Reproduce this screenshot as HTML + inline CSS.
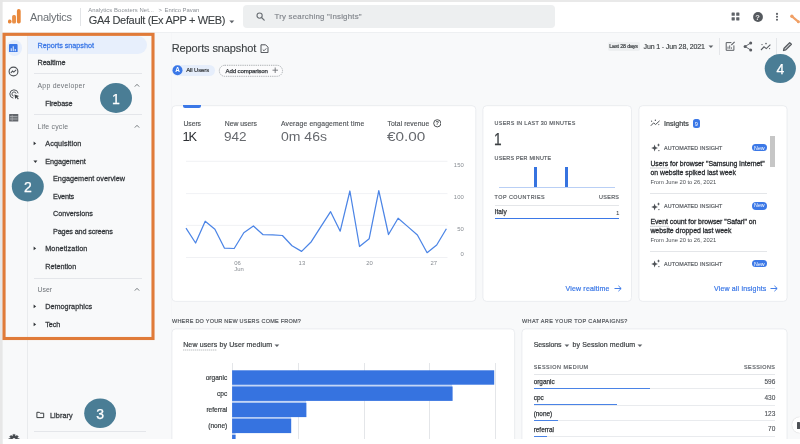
<!DOCTYPE html>
<html lang="en">
<head>
<meta charset="utf-8">
<title>Analytics - Reports snapshot</title>
<style>
html,body{margin:0;padding:0;}
body{width:800px;height:444px;overflow:hidden;position:relative;background:#f8f9fa;font-family:"Liberation Sans",sans-serif;}
#app{position:absolute;left:0;top:0;width:800px;height:444px;overflow:hidden;filter:blur(0.4px);}
.b{position:absolute;display:block;}
.t{position:absolute;white-space:nowrap;display:block;}
header,nav,main,.anno{display:contents;}
</style>
</head>
<body>
<div id="app">
<div class="b " style="left:0px;top:0px;width:800.00px;height:444.00px;background:#f8f9fa;"></div>
<header>
<div class="b " style="left:0px;top:2px;width:800.00px;height:30.00px;background:#ffffff;"></div>
<div class="b " style="left:0px;top:32px;width:800.00px;height:1.00px;background:#eef0f2;"></div>
<svg class="b" style="left:7.9px;top:8.2px;" width="14" height="17" viewBox="0 0 14 17"><rect x="8.9" y="1.1" width="3.8" height="14.4" rx="1.8" fill="#e8873a"/>
<rect x="4.1" y="7" width="3.9" height="8.5" rx="1.5" fill="#ea9048"/>
<circle cx="1.7" cy="13.5" r="1.9" fill="#e8873a"/></svg>
<span class="t " style="left:30.00px;top:11.33px;font-size:11px;line-height:13.2px;color:#6a6f74;letter-spacing:-0.252px;">Analytics</span>
<div class="b " style="left:80px;top:8px;width:0.80px;height:18.00px;background:#e2e4e7;"></div>
<span class="t " style="left:88.25px;top:6.62px;font-size:5.9px;line-height:7.08px;color:#8b9096;letter-spacing:0.062px;">Analytics Boosters Net...</span>
<span class="t " style="left:158.60px;top:6.62px;font-size:5.9px;line-height:7.08px;color:#8b9096;">&gt;</span>
<span class="t " style="left:164.50px;top:6.62px;font-size:5.9px;line-height:7.08px;color:#8b9096;letter-spacing:-0.031px;">Enrico Pavan</span>
<span class="t " style="left:88.75px;top:14.33px;font-size:11px;line-height:13.2px;color:#3c4043;-webkit-text-stroke:0.1px #3c4043;letter-spacing:-0.330px;">GA4 Default (Ex APP + WEB)</span>
<svg class="b" style="left:229px;top:19.5px;" width="6" height="4" viewBox="0 0 6 4"><path d="M0.3 0.5 L5.3 0.5 L2.8 3.3 Z" fill="#5f6368"/></svg>
<div class="b " style="left:243px;top:5px;width:312.00px;height:23.00px;background:#edeff0;border-radius:4px;"></div>
<svg class="b" style="left:256px;top:11.6px;" width="9" height="9" viewBox="0 0 9 9"><circle cx="3.6" cy="3.6" r="2.6" fill="none" stroke="#6a6f74" stroke-width="1.1"/><path d="M5.5 5.5 L8.2 8.2" stroke="#6a6f74" stroke-width="1.2" stroke-linecap="round"/></svg>
<span class="t " style="left:274.50px;top:12.31px;font-size:7.9px;line-height:9.48px;color:#80858b;-webkit-text-stroke:0.15px #80858b;letter-spacing:0.202px;">Try searching "Insights"</span>
<svg class="b" style="left:731.2px;top:11.8px;" width="9" height="9" viewBox="0 0 9 9"><g fill="#5f6368"><rect x="0.6" y="0.6" width="3.2" height="3.2" rx="0.4"/><rect x="5.2" y="0.6" width="3.2" height="3.2" rx="0.4"/><rect x="0.6" y="5.2" width="3.2" height="3.2" rx="0.4"/><rect x="5.2" y="5.2" width="3.2" height="3.2" rx="0.4"/></g></svg>
<svg class="b" style="left:752.6px;top:11.6px;" width="10" height="10" viewBox="0 0 10 10"><circle cx="5" cy="5" r="4.9" fill="#55595e"/></svg>
<span class="t " style="left:755.31px;top:12.85px;font-size:7.5px;line-height:9.0px;color:#e8e8e8;font-weight:700;">?</span>
<svg class="b" style="left:775px;top:12px;" width="4" height="10" viewBox="0 0 4 10"><g fill="#5f6368"><circle cx="2" cy="1.9" r="1.05"/><circle cx="2" cy="4.8" r="1.05"/><circle cx="2" cy="7.7" r="1.05"/></g></svg>
<svg class="b" style="left:788px;top:12px;" width="12" height="12" viewBox="0 0 12 12"><path d="M4.2 4.6 L10.2 9.6" stroke="#f0a066" stroke-width="2.1" stroke-linecap="round"/><circle cx="3.9" cy="4.3" r="1.7" fill="#f0a066"/><circle cx="10.4" cy="9.8" r="1.5" fill="#f0a066"/></svg>
</header>
<nav>
<div class="b " style="left:27px;top:33px;width:0.80px;height:406.00px;background:#e9ebed;"></div>
<div class="b " style="left:170.8px;top:33px;width:0.80px;height:406.00px;background:#f5f6f8;"></div>
<div class="b " style="left:6.6px;top:39.8px;width:15.80px;height:15.80px;background:#e6eefc;border-radius:50%;"></div>
<svg class="b" style="left:9.4px;top:43.7px;" width="8.6" height="8.8" viewBox="0 0 8.6 8.8"><rect x="0" y="0" width="8.6" height="8.8" rx="0.9" fill="#3b78e7"/><g fill="#dfe9fb"><rect x="1.7" y="4.3" width="1.1" height="2.9"/><rect x="3.7" y="2.3" width="1.1" height="4.9"/><rect x="5.7" y="5" width="1.1" height="2.2"/></g></svg>
<svg class="b" style="left:8.1px;top:65.8px;" width="11" height="11" viewBox="0 0 11 11"><circle cx="5.5" cy="5.5" r="4.4" fill="none" stroke="#4d5156" stroke-width="1.1"/><path d="M2.8 6.8 L4.6 5 L5.8 6.1 L8.1 3.9" fill="none" stroke="#4d5156" stroke-width="1.1"/></svg>
<svg class="b" style="left:9.0px;top:89.2px;" width="11.4" height="11.4" viewBox="0 0 12 12"><path d="M9.63 4.54 A4.4 4.4 0 1 0 4.54 9.63" fill="none" stroke="#4d5156" stroke-width="1.05"/><path d="M7.47 4.92 A2.2 2.2 0 1 0 4.92 7.47" fill="none" stroke="#4d5156" stroke-width="1"/><path d="M5.7 5.7 L10.6 7.5 L8.7 8.4 L10.3 10.4 L9.4 11 L7.9 9 L6.6 10.5 Z" fill="#3c4043"/></svg>
<svg class="b" style="left:9.2px;top:114.2px;" width="9.6" height="7.8" viewBox="0 0 9.6 7.8"><rect x="0.1" y="0.1" width="9.2" height="7.5" rx="0.5" fill="#63676c"/><path d="M0.8 2.7 H8.6 M0.8 5 H8.6" stroke="#c9cbce" stroke-width="0.7"/><path d="M3.2 0.8 V7" stroke="#b9bbbf" stroke-width="0.6"/></svg>
<svg class="b" style="left:8.2px;top:431.6px;" width="12" height="8" viewBox="0 0 12 8"><path d="M4.88 2.42 L7.12 2.42 L7.00 3.83 L7.96 4.23 L8.87 3.15 L10.45 4.73 L9.37 5.64 L9.77 6.60 L11.18 6.48 L11.18 8.72 L9.77 8.60 L9.37 9.56 L10.45 10.47 L8.87 12.05 L7.96 10.97 L7.00 11.37 L7.12 12.78 L4.88 12.78 L5.00 11.37 L4.04 10.97 L3.13 12.05 L1.55 10.47 L2.63 9.56 L2.23 8.60 L0.82 8.72 L0.82 6.48 L2.23 6.60 L2.63 5.64 L1.55 4.73 L3.13 3.15 L4.04 4.23 L5.00 3.83 Z" fill="#45494e" stroke="#45494e" stroke-width="0.4" stroke-linejoin="round"/><circle cx="6" cy="7.6" r="1.6" fill="#f8f9fa"/></svg>
<div class="b " style="left:27.6px;top:36.3px;width:119.70px;height:17.30px;background:#e7effc;border-radius:0 9px 9px 0;"></div>
<span class="t " style="left:37.50px;top:41.90px;font-size:7.25px;line-height:8.7px;color:#3b78e7;-webkit-text-stroke:0.26px #3b78e7;letter-spacing:-0.022px;">Reports snapshot</span>
<span class="t " style="left:37.50px;top:59.20px;font-size:7.25px;line-height:8.7px;color:#33373b;-webkit-text-stroke:0.26px #33373b;letter-spacing:-0.087px;">Realtime</span>
<div class="b " style="left:33.5px;top:73px;width:108.00px;height:0.70px;background:#e4e6ea;"></div>
<span class="t " style="left:37.50px;top:82.32px;font-size:6.9px;line-height:8.28px;color:#6f7479;letter-spacing:0.250px;">App developer</span>
<span class="t " style="left:45.20px;top:99.60px;font-size:7.25px;line-height:8.7px;color:#33373b;-webkit-text-stroke:0.26px #33373b;letter-spacing:-0.115px;">Firebase</span>
<div class="b " style="left:33.5px;top:114px;width:108.00px;height:0.70px;background:#e4e6ea;"></div>
<span class="t " style="left:37.50px;top:122.82px;font-size:6.9px;line-height:8.28px;color:#6f7479;letter-spacing:0.193px;">Life cycle</span>
<span class="t " style="left:45.20px;top:140.20px;font-size:7.25px;line-height:8.7px;color:#33373b;-webkit-text-stroke:0.26px #33373b;letter-spacing:0.114px;">Acquisition</span>
<span class="t " style="left:45.20px;top:157.70px;font-size:7.25px;line-height:8.7px;color:#33373b;-webkit-text-stroke:0.26px #33373b;letter-spacing:-0.057px;">Engagement</span>
<span class="t " style="left:53.00px;top:175.20px;font-size:7.25px;line-height:8.7px;color:#33373b;-webkit-text-stroke:0.26px #33373b;letter-spacing:0.015px;">Engagement overview</span>
<span class="t " style="left:53.00px;top:192.80px;font-size:7.25px;line-height:8.7px;color:#33373b;-webkit-text-stroke:0.26px #33373b;letter-spacing:-0.193px;">Events</span>
<span class="t " style="left:53.00px;top:210.20px;font-size:7.25px;line-height:8.7px;color:#33373b;-webkit-text-stroke:0.26px #33373b;letter-spacing:-0.050px;">Conversions</span>
<span class="t " style="left:53.00px;top:227.80px;font-size:7.25px;line-height:8.7px;color:#33373b;-webkit-text-stroke:0.26px #33373b;letter-spacing:-0.142px;">Pages and screens</span>
<span class="t " style="left:45.20px;top:245.20px;font-size:7.25px;line-height:8.7px;color:#33373b;-webkit-text-stroke:0.26px #33373b;letter-spacing:0.099px;">Monetization</span>
<span class="t " style="left:45.20px;top:262.90px;font-size:7.25px;line-height:8.7px;color:#33373b;-webkit-text-stroke:0.26px #33373b;letter-spacing:-0.005px;">Retention</span>
<div class="b " style="left:33.5px;top:277.5px;width:108.00px;height:0.70px;background:#e4e6ea;"></div>
<span class="t " style="left:37.50px;top:286.02px;font-size:6.9px;line-height:8.28px;color:#6f7479;letter-spacing:-0.023px;">User</span>
<span class="t " style="left:45.20px;top:303.20px;font-size:7.25px;line-height:8.7px;color:#33373b;-webkit-text-stroke:0.26px #33373b;letter-spacing:0.023px;">Demographics</span>
<span class="t " style="left:45.20px;top:320.80px;font-size:7.25px;line-height:8.7px;color:#33373b;-webkit-text-stroke:0.26px #33373b;letter-spacing:-0.071px;">Tech</span>
<svg class="b" style="left:134px;top:83.0px;" width="6" height="5" viewBox="0 0 6 5"><path d="M0.8 3.6 L3 1.3 L5.2 3.6" fill="none" stroke="#6a6f74" stroke-width="0.9"/></svg>
<svg class="b" style="left:134px;top:123.5px;" width="6" height="5" viewBox="0 0 6 5"><path d="M0.8 3.6 L3 1.3 L5.2 3.6" fill="none" stroke="#6a6f74" stroke-width="0.9"/></svg>
<svg class="b" style="left:134px;top:286.7px;" width="6" height="5" viewBox="0 0 6 5"><path d="M0.8 3.6 L3 1.3 L5.2 3.6" fill="none" stroke="#6a6f74" stroke-width="0.9"/></svg>
<svg class="b" style="left:33.2px;top:141.29999999999998px;" width="4" height="5" viewBox="0 0 4 5"><path d="M0.6 0.5 L3.1 2.4 L0.6 4.3 Z" fill="#2f3337"/></svg>
<svg class="b" style="left:32.8px;top:159.6px;" width="5" height="4" viewBox="0 0 5 4"><path d="M0.4 0.6 L4.4 0.6 L2.4 3.1 Z" fill="#2f3337"/></svg>
<svg class="b" style="left:33.2px;top:246.29999999999998px;" width="4" height="5" viewBox="0 0 4 5"><path d="M0.6 0.5 L3.1 2.4 L0.6 4.3 Z" fill="#2f3337"/></svg>
<svg class="b" style="left:33.2px;top:304.3px;" width="4" height="5" viewBox="0 0 4 5"><path d="M0.6 0.5 L3.1 2.4 L0.6 4.3 Z" fill="#2f3337"/></svg>
<svg class="b" style="left:33.2px;top:321.9px;" width="4" height="5" viewBox="0 0 4 5"><path d="M0.6 0.5 L3.1 2.4 L0.6 4.3 Z" fill="#2f3337"/></svg>
<svg class="b" style="left:35.6px;top:411.2px;" width="9" height="8" viewBox="0 0 9 8"><path d="M0.9 1.3 H3.3 L4.1 2.2 H7.7 V6.6 H0.9 Z" fill="none" stroke="#3c4043" stroke-width="1" stroke-linejoin="round"/></svg>
<span class="t " style="left:50.00px;top:412.20px;font-size:7.25px;line-height:8.7px;color:#33373b;-webkit-text-stroke:0.26px #33373b;letter-spacing:0.073px;">Library</span>
<div class="b " style="left:34px;top:430.7px;width:112.00px;height:0.70px;background:#e4e6ea;"></div>
</nav>
<main>
<span class="t " style="left:171.80px;top:42.33px;font-size:11px;line-height:13.2px;color:#3c4043;-webkit-text-stroke:0.12px #3c4043;letter-spacing:-0.121px;">Reports snapshot</span>
<svg class="b" style="left:260px;top:44px;" width="9" height="9.4" viewBox="0 0 9 9.4"><path d="M1 0.8 H5.6 L8 3.2 V8.6 H1 Z" fill="none" stroke="#4d5156" stroke-width="1"/><path d="M2.8 5.6 L4 6.8 L6.3 4.4" fill="none" stroke="#4d5156" stroke-width="0.9"/></svg>
<div class="b " style="left:172px;top:65px;width:42.50px;height:11.00px;background:#e6eefb;border-radius:6px;"></div>
<svg class="b" style="left:172px;top:65px;" width="11" height="11" viewBox="0 0 11 11"><circle cx="5.5" cy="5.3" r="5" fill="#3b78e7"/></svg>
<span class="t " style="left:175.19px;top:66.02px;font-size:6.4px;line-height:7.68px;color:#ffffff;font-weight:700;">A</span>
<span class="t " style="left:186.20px;top:67.22px;font-size:5.9px;line-height:7.08px;color:#33373b;-webkit-text-stroke:0.2px #33373b;letter-spacing:-0.075px;">All Users</span>
<svg class="b" style="left:218px;top:64px;" width="66" height="14" viewBox="0 0 66 14"><rect x="1.3" y="1.3" width="63.2" height="11" rx="5.5" fill="#fbfbfc" stroke="#8d9297" stroke-width="0.7" stroke-dasharray="1.3 0.9"/></svg>
<span class="t " style="left:225.50px;top:67.10px;font-size:6.1px;line-height:7.32px;color:#33373b;-webkit-text-stroke:0.25px #33373b;letter-spacing:-0.122px;">Add comparison</span>
<svg class="b" style="left:272px;top:67px;" width="6.5" height="6.5" viewBox="0 0 6.5 6.5"><path d="M3.2 0.5 V6 M0.5 3.2 H6" stroke="#5f6368" stroke-width="0.8"/></svg>
<div class="b " style="left:607.5px;top:41.6px;width:32.50px;height:9.00px;background:#eef0f1;border-radius:2px;"></div>
<span class="t " style="left:609.30px;top:43.39px;font-size:5.3px;line-height:6.36px;color:#3c4043;-webkit-text-stroke:0.2px #3c4043;letter-spacing:-0.123px;">Last 28 days</span>
<span class="t " style="left:643.50px;top:42.75px;font-size:7.0px;line-height:8.4px;color:#3c4043;-webkit-text-stroke:0.15px #3c4043;letter-spacing:-0.122px;">Jun 1 - Jun 28, 2021</span>
<svg class="b" style="left:707.8px;top:45px;" width="6" height="4" viewBox="0 0 6 4"><path d="M0.5 0.5 L5.3 0.5 L2.9 3.1 Z" fill="#5f6368"/></svg>
<div class="b " style="left:719.0px;top:37.5px;width:1.00px;height:17.00px;background:#e4e6e9;"></div>
<svg class="b" style="left:724.9px;top:40.7px;" width="10.5" height="10.5" viewBox="0 0 10.5 10.5"><path d="M6.4 1.6 H1.2 V9.3 H8.9 V4.4" fill="none" stroke="#5a5e63" stroke-width="1"/><path d="M3 7.8 V5.6 M4.7 7.8 V4.4 M6.4 7.8 V6.3" stroke="#5a5e63" stroke-width="0.9"/><path d="M6.3 4.2 L9.6 0.8" stroke="#5a5e63" stroke-width="1.1"/></svg>
<svg class="b" style="left:743px;top:40.6px;" width="10" height="11" viewBox="0 0 10 11"><g fill="#5a5e63"><circle cx="7.7" cy="2" r="1.5"/><circle cx="2.1" cy="5.5" r="1.5"/><circle cx="7.7" cy="9" r="1.5"/></g><path d="M7.7 2 L2.1 5.5 L7.7 9" fill="none" stroke="#5a5e63" stroke-width="0.9"/></svg>
<svg class="b" style="left:760px;top:41.5px;" width="11.5" height="9.5" viewBox="0 0 11.5 9.5"><path d="M1 8 L4 4.8 L6.3 6.6 L10.4 2.6" fill="none" stroke="#5a5e63" stroke-width="1.1"/><g fill="#5a5e63"><circle cx="2" cy="2.6" r="0.7"/><circle cx="6" cy="1.6" r="0.8"/><circle cx="9.6" cy="6.6" r="0.6"/></g></svg>
<div class="b " style="left:776.2px;top:37.5px;width:0.80px;height:17.00px;background:#e4e6e9;"></div>
<svg class="b" style="left:781.5px;top:40.8px;" width="11" height="11" viewBox="0 0 11 11"><path d="M1.5 9.5 L2.1 7.2 L7.7 1.6 L9.4 3.3 L3.8 8.9 Z" fill="#c9cbce" stroke="#55595e" stroke-width="1.25" stroke-linejoin="round"/></svg>
<svg class="b" style="left:0px;top:0px;" width="800" height="444" viewBox="0 0 800 444"><rect x="171.9" y="105.7" width="303.90" height="195.70" rx="3.8" fill="#ffffff" stroke="#e9ebee" stroke-width="0.9"/></svg>
<div class="b " style="left:183.2px;top:105.4px;width:18.10px;height:2.60px;background:#3b78e7;border-radius:0 0 2px 2px;"></div>
<span class="t " style="left:183.50px;top:119.68px;font-size:6.8px;line-height:8.16px;color:#505458;-webkit-text-stroke:0.15px #505458;letter-spacing:-0.064px;">Users</span>
<span class="t " style="left:224.80px;top:119.68px;font-size:6.8px;line-height:8.16px;color:#505458;-webkit-text-stroke:0.15px #505458;letter-spacing:0.010px;">New users</span>
<span class="t " style="left:281.00px;top:119.68px;font-size:6.8px;line-height:8.16px;color:#505458;-webkit-text-stroke:0.15px #505458;letter-spacing:0.162px;">Average engagement time</span>
<span class="t " style="left:387.50px;top:119.68px;font-size:6.8px;line-height:8.16px;color:#505458;-webkit-text-stroke:0.15px #505458;letter-spacing:0.073px;">Total revenue</span>
<svg class="b" style="left:432.8px;top:119.2px;" width="8.6" height="8.6" viewBox="0 0 8.6 8.6"><circle cx="4.3" cy="4.3" r="3.6" fill="none" stroke="#3c4043" stroke-width="0.9"/></svg>
<span class="t " style="left:435.39px;top:119.90px;font-size:5.6px;line-height:6.72px;color:#3c4043;font-weight:700;">?</span>
<span class="t " style="left:182.60px;top:129.44px;font-size:12.8px;line-height:15.36px;color:#2b2e32;letter-spacing:-1.257px;">1K</span>
<span class="t " style="left:224.40px;top:129.56px;font-size:12.6px;line-height:15.12px;color:#66696e;transform:scaleX(1.0750);transform-origin:0 50%;">942</span>
<span class="t " style="left:280.60px;top:129.56px;font-size:12.6px;line-height:15.12px;color:#66696e;transform:scaleX(1.1133);transform-origin:0 50%;">0m 46s</span>
<span class="t " style="left:387.30px;top:129.56px;font-size:12.6px;line-height:15.12px;color:#66696e;transform:scaleX(1.2147);transform-origin:0 50%;">€0.00</span>
<svg class="b" style="left:0;top:0" width="800" height="444" viewBox="0 0 800 444"><path d="M186 161.3 H447.5" stroke="#eceef1" stroke-width="0.8"/><path d="M186 193.6 H447.5" stroke="#eceef1" stroke-width="0.8"/><path d="M186 225.4 H447.5" stroke="#eceef1" stroke-width="0.8"/><path d="M186 257.5 H447.5" stroke="#eceef1" stroke-width="0.8"/><path d="M186 228.2 L195.6 243 L205.2 221.2 L214.9 229.2 L224.5 248.2 L234.2 248.5 L243.8 232.7 L253.4 226 L263.1 234.7 L272.7 234.8 L282.4 235.5 L292 245.7 L301.6 251.4 L311.3 241.7 L320.9 226.7 L330.6 211.7 L340.2 231.2 L349.9 191 L359.5 246.5 L369.2 238.7 L378.8 190.7 L388.5 234.5 L398.1 218.2 L407.8 226.6 L417.4 235 L427.1 252.7 L436.7 245 L446.4 228.7" fill="none" stroke="#4c85e6" stroke-width="1.25" stroke-linejoin="round"/></svg>
<span class="t " style="left:453.86px;top:162.22px;font-size:5.9px;line-height:7.08px;color:#878c92;">150</span>
<span class="t " style="left:453.86px;top:194.32px;font-size:5.9px;line-height:7.08px;color:#878c92;">100</span>
<span class="t " style="left:457.14px;top:226.32px;font-size:5.9px;line-height:7.08px;color:#878c92;">50</span>
<span class="t " style="left:460.42px;top:250.62px;font-size:5.9px;line-height:7.08px;color:#878c92;">0</span>
<span class="t " style="left:234.20px;top:260.42px;font-size:5.9px;line-height:7.08px;color:#878c92;">06</span>
<span class="t " style="left:234.20px;top:265.72px;font-size:5.9px;line-height:7.08px;color:#878c92;">Jun</span>
<span class="t " style="left:298.62px;top:260.42px;font-size:5.9px;line-height:7.08px;color:#878c92;">13</span>
<span class="t " style="left:366.32px;top:260.42px;font-size:5.9px;line-height:7.08px;color:#878c92;">20</span>
<span class="t " style="left:430.52px;top:260.42px;font-size:5.9px;line-height:7.08px;color:#878c92;">27</span>
<svg class="b" style="left:0px;top:0px;" width="800" height="444" viewBox="0 0 800 444"><rect x="482.9" y="105.7" width="148.60" height="195.70" rx="3.8" fill="#ffffff" stroke="#e9ebee" stroke-width="0.9"/></svg>
<span class="t " style="left:494.60px;top:119.72px;font-size:5.4px;line-height:6.48px;color:#585c61;-webkit-text-stroke:0.18px #585c61;letter-spacing:0.312px;">USERS IN LAST 30 MINUTES</span>
<span class="t " style="left:494.30px;top:129.17px;font-size:17.2px;line-height:20.64px;color:#3c4043;-webkit-text-stroke:0.25px #3c4043;transform:scaleX(0.7945);transform-origin:0 50%;">1</span>
<span class="t " style="left:494.60px;top:154.72px;font-size:5.4px;line-height:6.48px;color:#585c61;-webkit-text-stroke:0.18px #585c61;letter-spacing:0.213px;">USERS PER MINUTE</span>
<div class="b " style="left:499px;top:186.6px;width:115.50px;height:0.70px;background:#b9cff5;"></div>
<div class="b " style="left:533.8px;top:166.8px;width:3.20px;height:20.20px;background:#3673e0;"></div>
<div class="b " style="left:565px;top:166.8px;width:3.30px;height:20.20px;background:#3673e0;"></div>
<span class="t " style="left:494.60px;top:194.42px;font-size:5.4px;line-height:6.48px;color:#585c61;-webkit-text-stroke:0.18px #585c61;letter-spacing:0.499px;">TOP COUNTRIES</span>
<span class="t " style="left:599.00px;top:194.42px;font-size:5.4px;line-height:6.48px;color:#585c61;-webkit-text-stroke:0.18px #585c61;letter-spacing:0.349px;">USERS</span>
<div class="b " style="left:494.6px;top:204.7px;width:124.40px;height:0.60px;background:#e4e6e9;"></div>
<span class="t " style="left:494.60px;top:208.46px;font-size:6.5px;line-height:7.8px;color:#33373b;-webkit-text-stroke:0.25px #33373b;letter-spacing:0.070px;">Italy</span>
<span class="t " style="left:615.95px;top:208.64px;font-size:6.2px;line-height:7.44px;color:#33373b;">1</span>
<div class="b " style="left:494.6px;top:217.8px;width:124.40px;height:1.00px;background:#3b78e7;"></div>
<span class="t " style="left:565.50px;top:285.05px;font-size:7.0px;line-height:8.4px;color:#3b78e7;-webkit-text-stroke:0.2px #3b78e7;letter-spacing:0.176px;">View realtime</span>
<svg class="b" style="left:614.3px;top:285px;" width="8" height="7" viewBox="0 0 8 7"><path d="M0.5 3.5 H7 M4.4 0.8 L7.2 3.5 L4.4 6.2" fill="none" stroke="#3b78e7" stroke-width="0.95"/></svg>
<svg class="b" style="left:0px;top:0px;" width="800" height="444" viewBox="0 0 800 444"><rect x="638.9" y="105.7" width="148.20" height="195.70" rx="3.8" fill="#ffffff" stroke="#e9ebee" stroke-width="0.9"/></svg>
<svg class="b" style="left:650px;top:119.4px;" width="10.5" height="8" viewBox="0 0 10.5 8"><path d="M0.8 6.8 L3.6 3.9 L5.6 5.5 L9.6 1.8" fill="none" stroke="#4d5156" stroke-width="1"/><g fill="#4d5156"><circle cx="1.6" cy="2.2" r="0.6"/><circle cx="5.4" cy="1.2" r="0.7"/><circle cx="8.8" cy="5.6" r="0.55"/></g></svg>
<span class="t " style="left:664.00px;top:119.69px;font-size:7.1px;line-height:8.52px;color:#3c4043;-webkit-text-stroke:0.22px #3c4043;letter-spacing:0.033px;">Insights</span>
<div class="b " style="left:692.5px;top:118.8px;width:7.50px;height:8.80px;background:#3b78e7;border-radius:2.5px;"></div>
<span class="t " style="left:694.69px;top:120.90px;font-size:5.6px;line-height:6.72px;color:#ffffff;">9</span>
<svg class="b" style="left:650.6px;top:143.4px;" width="9.6" height="9.2" viewBox="0 0 9.6 9.2"><g fill="#4d5156"><path d="M3.6 1.6 L4.5 4.1 L7 5 L4.5 5.9 L3.6 8.4 L2.7 5.9 L0.2 5 L2.7 4.1 Z"/><path d="M7.6 0.3 L8.1 1.5 L9.3 2 L8.1 2.5 L7.6 3.7 L7.1 2.5 L5.9 2 L7.1 1.5 Z"/><circle cx="7.9" cy="7.6" r="0.7"/></g></svg>
<span class="t " style="left:664.00px;top:145.22px;font-size:5.4px;line-height:6.48px;color:#585c61;-webkit-text-stroke:0.18px #585c61;letter-spacing:0.106px;">AUTOMATED INSIGHT</span>
<div class="b " style="left:751.5px;top:143.6px;width:15.80px;height:7.70px;background:#3b78e7;border-radius:4px;"></div>
<span class="t " style="left:754.10px;top:144.69px;font-size:5.3px;line-height:6.36px;color:#ffffff;">New</span>
<span class="t " style="left:650.40px;top:160.22px;font-size:6.9px;line-height:8.28px;color:#2b2e32;-webkit-text-stroke:0.3px #2b2e32;letter-spacing:-0.038px;">Users for browser "Samsung Internet"</span>
<span class="t " style="left:650.40px;top:169.02px;font-size:6.9px;line-height:8.28px;color:#2b2e32;-webkit-text-stroke:0.3px #2b2e32;letter-spacing:0.003px;">on website spiked last week</span>
<span class="t " style="left:650.40px;top:179.08px;font-size:5.8px;line-height:6.96px;color:#4d5156;letter-spacing:-0.027px;">From June 20 to 26, 2021</span>
<svg class="b" style="left:0px;top:0px;" width="800" height="444" viewBox="0 0 800 444"><path d="M650.4 168.00 H669" stroke="#8a8f95" stroke-width="0.7" stroke-dasharray="1.1 0.9"/></svg>
<div class="b " style="left:650.4px;top:193.3px;width:116.60px;height:0.70px;background:#e4e6e9;"></div>
<svg class="b" style="left:650.6px;top:201.70000000000002px;" width="9.6" height="9.2" viewBox="0 0 9.6 9.2"><g fill="#4d5156"><path d="M3.6 1.6 L4.5 4.1 L7 5 L4.5 5.9 L3.6 8.4 L2.7 5.9 L0.2 5 L2.7 4.1 Z"/><path d="M7.6 0.3 L8.1 1.5 L9.3 2 L8.1 2.5 L7.6 3.7 L7.1 2.5 L5.9 2 L7.1 1.5 Z"/><circle cx="7.9" cy="7.6" r="0.7"/></g></svg>
<span class="t " style="left:664.00px;top:202.92px;font-size:5.4px;line-height:6.48px;color:#585c61;-webkit-text-stroke:0.18px #585c61;letter-spacing:0.106px;">AUTOMATED INSIGHT</span>
<div class="b " style="left:751.5px;top:201.9px;width:15.80px;height:7.70px;background:#3b78e7;border-radius:4px;"></div>
<span class="t " style="left:754.10px;top:202.39px;font-size:5.3px;line-height:6.36px;color:#ffffff;">New</span>
<span class="t " style="left:650.40px;top:217.72px;font-size:6.9px;line-height:8.28px;color:#2b2e32;-webkit-text-stroke:0.3px #2b2e32;letter-spacing:-0.035px;">Event count for browser "Safari" on</span>
<span class="t " style="left:650.40px;top:226.52px;font-size:6.9px;line-height:8.28px;color:#2b2e32;-webkit-text-stroke:0.3px #2b2e32;letter-spacing:-0.009px;">website dropped last week</span>
<span class="t " style="left:650.40px;top:236.58px;font-size:5.8px;line-height:6.96px;color:#4d5156;letter-spacing:-0.027px;">From June 20 to 26, 2021</span>
<svg class="b" style="left:0px;top:0px;" width="800" height="444" viewBox="0 0 800 444"><path d="M650.4 226.30 H669" stroke="#8a8f95" stroke-width="0.7" stroke-dasharray="1.1 0.9"/></svg>
<div class="b " style="left:650.4px;top:251.4px;width:116.60px;height:0.70px;background:#e4e6e9;"></div>
<svg class="b" style="left:650.6px;top:259.4px;" width="9.6" height="9.2" viewBox="0 0 9.6 9.2"><g fill="#4d5156"><path d="M3.6 1.6 L4.5 4.1 L7 5 L4.5 5.9 L3.6 8.4 L2.7 5.9 L0.2 5 L2.7 4.1 Z"/><path d="M7.6 0.3 L8.1 1.5 L9.3 2 L8.1 2.5 L7.6 3.7 L7.1 2.5 L5.9 2 L7.1 1.5 Z"/><circle cx="7.9" cy="7.6" r="0.7"/></g></svg>
<span class="t " style="left:664.00px;top:261.22px;font-size:5.4px;line-height:6.48px;color:#585c61;-webkit-text-stroke:0.18px #585c61;letter-spacing:0.106px;">AUTOMATED INSIGHT</span>
<div class="b " style="left:751.5px;top:259.6px;width:15.80px;height:7.70px;background:#3b78e7;border-radius:4px;"></div>
<span class="t " style="left:754.10px;top:260.69px;font-size:5.3px;line-height:6.36px;color:#ffffff;">New</span>
<div class="b " style="left:770.2px;top:136px;width:4.40px;height:30.60px;background:#c6c6c6;"></div>
<span class="t " style="left:714.00px;top:285.15px;font-size:7.0px;line-height:8.4px;color:#3b78e7;-webkit-text-stroke:0.2px #3b78e7;letter-spacing:0.164px;">View all insights</span>
<svg class="b" style="left:770px;top:285.2px;" width="8" height="7" viewBox="0 0 8 7"><path d="M0.5 3.5 H7 M4.4 0.8 L7.2 3.5 L4.4 6.2" fill="none" stroke="#3b78e7" stroke-width="0.95"/></svg>
<span class="t " style="left:172.00px;top:317.96px;font-size:5.5px;line-height:6.6px;color:#4d5156;-webkit-text-stroke:0.16px #4d5156;letter-spacing:0.230px;">WHERE DO YOUR NEW USERS COME FROM?</span>
<svg class="b" style="left:0px;top:0px;" width="800" height="444" viewBox="0 0 800 444"><rect x="171.9" y="328.9" width="342.70" height="120.90" rx="3.8" fill="#ffffff" stroke="#e9ebee" stroke-width="0.9"/></svg>
<span class="t " style="left:183.20px;top:341.35px;font-size:7.0px;line-height:8.4px;color:#3c4043;-webkit-text-stroke:0.2px #3c4043;letter-spacing:0.123px;">New users by User medium</span>
<svg class="b" style="left:274px;top:343.6px;" width="6" height="4" viewBox="0 0 6 4"><path d="M0.5 0.5 L5.3 0.5 L2.9 3.1 Z" fill="#5f6368"/></svg>
<svg class="b" style="left:0px;top:0px;" width="800" height="444" viewBox="0 0 800 444"><path d="M183.2 350 H217" stroke="#8a8f95" stroke-width="0.7" stroke-dasharray="1.1 0.9"/></svg>
<div class="b " style="left:232.0px;top:362.5px;width:0.70px;height:77.50px;background:#e4e6e9;"></div>
<div class="b " style="left:297.7px;top:362.5px;width:0.70px;height:77.50px;background:#e4e6e9;"></div>
<div class="b " style="left:363.5px;top:362.5px;width:0.70px;height:77.50px;background:#e4e6e9;"></div>
<div class="b " style="left:429.3px;top:362.5px;width:0.70px;height:77.50px;background:#e4e6e9;"></div>
<div class="b " style="left:495.09999999999997px;top:362.5px;width:0.70px;height:77.50px;background:#e4e6e9;"></div>
<svg class="b" style="left:0px;top:0px;" width="800" height="444" viewBox="0 0 800 444"><rect x="232.1" y="384" width="220" height="3" fill="#c4d6f6"/><rect x="232.1" y="400" width="74" height="3.2" fill="#c4d6f6"/><rect x="232.1" y="416.6" width="59" height="3" fill="#c4d6f6"/><rect x="232.1" y="432.6" width="3.4" height="3" fill="#c4d6f6"/><rect x="232.1" y="370.3" width="262.10" height="14.40" fill="#3673e0"/><rect x="232.1" y="386.5" width="220.50" height="14.40" fill="#3673e0"/><rect x="232.1" y="402.8" width="74.30" height="14.30" fill="#3673e0"/><rect x="232.1" y="418.7" width="59.10" height="14.40" fill="#3673e0"/><rect x="232.1" y="434.9" width="3.50" height="5.10" fill="#3673e0"/></svg>
<span class="t " style="left:205.65px;top:374.10px;font-size:6.6px;line-height:7.92px;color:#3c4043;-webkit-text-stroke:0.2px #3c4043;">organic</span>
<span class="t " style="left:217.03px;top:389.90px;font-size:6.6px;line-height:7.92px;color:#3c4043;-webkit-text-stroke:0.2px #3c4043;">cpc</span>
<span class="t " style="left:206.39px;top:405.90px;font-size:6.6px;line-height:7.92px;color:#3c4043;-webkit-text-stroke:0.2px #3c4043;">referral</span>
<span class="t " style="left:208.22px;top:422.10px;font-size:6.6px;line-height:7.92px;color:#3c4043;-webkit-text-stroke:0.2px #3c4043;">(none)</span>
<span class="t " style="left:522.00px;top:317.86px;font-size:5.5px;line-height:6.6px;color:#4d5156;-webkit-text-stroke:0.16px #4d5156;letter-spacing:0.376px;">WHAT ARE YOUR TOP CAMPAIGNS?</span>
<svg class="b" style="left:0px;top:0px;" width="800" height="444" viewBox="0 0 800 444"><rect x="521.9" y="328.9" width="265.20" height="120.90" rx="3.8" fill="#ffffff" stroke="#e9ebee" stroke-width="0.9"/></svg>
<span class="t " style="left:533.70px;top:341.35px;font-size:7.0px;line-height:8.4px;color:#3c4043;-webkit-text-stroke:0.2px #3c4043;letter-spacing:-0.072px;">Sessions</span>
<svg class="b" style="left:563.6px;top:343.8px;" width="6" height="4" viewBox="0 0 6 4"><path d="M0.5 0.5 L5.3 0.5 L2.9 3.1 Z" fill="#5f6368"/></svg>
<span class="t " style="left:572.60px;top:341.35px;font-size:7.0px;line-height:8.4px;color:#3c4043;-webkit-text-stroke:0.2px #3c4043;letter-spacing:0.095px;">by Session medium</span>
<svg class="b" style="left:637.4px;top:343.8px;" width="6" height="4" viewBox="0 0 6 4"><path d="M0.5 0.5 L5.3 0.5 L2.9 3.1 Z" fill="#5f6368"/></svg>
<span class="t " style="left:533.70px;top:363.72px;font-size:5.4px;line-height:6.48px;color:#585c61;-webkit-text-stroke:0.18px #585c61;letter-spacing:0.546px;">SESSION MEDIUM</span>
<span class="t " style="left:744.00px;top:363.72px;font-size:5.4px;line-height:6.48px;color:#585c61;-webkit-text-stroke:0.18px #585c61;letter-spacing:0.484px;">SESSIONS</span>
<div class="b " style="left:533.7px;top:373.8px;width:241.30px;height:0.60px;background:#e4e6e9;"></div>
<span class="t " style="left:533.70px;top:378.42px;font-size:6.4px;line-height:7.68px;color:#33373b;-webkit-text-stroke:0.25px #33373b;">organic</span>
<span class="t " style="left:764.45px;top:378.36px;font-size:6.5px;line-height:7.8px;color:#4d5156;-webkit-text-stroke:0.12px #4d5156;">596</span>
<div class="b " style="left:533.7px;top:388.4px;width:241.30px;height:0.60px;background:#e9ebee;"></div>
<div class="b " style="left:533.7px;top:388.0px;width:116.10px;height:1.00px;background:#4a83e6;"></div>
<span class="t " style="left:533.70px;top:394.32px;font-size:6.4px;line-height:7.68px;color:#33373b;-webkit-text-stroke:0.25px #33373b;">cpc</span>
<span class="t " style="left:764.45px;top:394.26px;font-size:6.5px;line-height:7.8px;color:#4d5156;-webkit-text-stroke:0.12px #4d5156;">430</span>
<div class="b " style="left:533.7px;top:404.5px;width:241.30px;height:0.60px;background:#e9ebee;"></div>
<div class="b " style="left:533.7px;top:404.1px;width:83.60px;height:1.00px;background:#4a83e6;"></div>
<span class="t " style="left:533.70px;top:409.92px;font-size:6.4px;line-height:7.68px;color:#33373b;-webkit-text-stroke:0.25px #33373b;">(none)</span>
<span class="t " style="left:764.45px;top:409.86px;font-size:6.5px;line-height:7.8px;color:#4d5156;-webkit-text-stroke:0.12px #4d5156;">123</span>
<div class="b " style="left:533.7px;top:420.2px;width:241.30px;height:0.60px;background:#e9ebee;"></div>
<div class="b " style="left:533.7px;top:419.8px;width:24.00px;height:1.00px;background:#4a83e6;"></div>
<span class="t " style="left:533.70px;top:425.52px;font-size:6.4px;line-height:7.68px;color:#33373b;-webkit-text-stroke:0.25px #33373b;">referral</span>
<span class="t " style="left:768.07px;top:425.46px;font-size:6.5px;line-height:7.8px;color:#4d5156;-webkit-text-stroke:0.12px #4d5156;">70</span>
<div class="b " style="left:533.7px;top:435.9px;width:241.30px;height:0.60px;background:#e9ebee;"></div>
<div class="b " style="left:533.7px;top:435.5px;width:13.60px;height:1.00px;background:#4a83e6;"></div>
<div class="b " style="left:792px;top:417px;width:16.00px;height:16.00px;background:#ffffff;border-radius:50%;box-shadow:0 0 1px rgba(0,0,0,.25);"></div>
<div class="b " style="left:796.6px;top:421.5px;width:3.40px;height:7.50px;background:#4d5156;border-radius:0.6px;"></div>
</main>
<div class="anno">
<div class="b " style="left:0px;top:0px;width:800.00px;height:2.00px;background:#e9e9e9;"></div>
<svg class="b" style="left:0px;top:0px;" width="4" height="444" viewBox="0 0 4 444"><rect x="0" y="0" width="2.6" height="444" fill="#e7e7e7"/></svg>
<div class="b " style="left:3px;top:439px;width:797.00px;height:5.00px;background:#ffffff;"></div>
<svg class="b" style="left:0px;top:0px;" width="800" height="444" viewBox="0 0 800 444"><rect x="4.05" y="34.35" width="148.95" height="304.15" fill="none" stroke="#e07b39" stroke-width="3.1"/></svg>
<svg class="b" style="left:0px;top:0px;" width="800" height="444" viewBox="0 0 800 444"><ellipse cx="116" cy="98" rx="16" ry="14.9" fill="#4a7d95"/></svg>
<span class="t " style="left:112.11px;top:90.51px;font-size:14px;line-height:16.8px;color:#ffffff;-webkit-text-stroke:0.25px #ffffff;">1</span>
<svg class="b" style="left:0px;top:0px;" width="800" height="444" viewBox="0 0 800 444"><ellipse cx="27.8" cy="186.5" rx="16" ry="14.9" fill="#4a7d95"/></svg>
<span class="t " style="left:23.91px;top:179.01px;font-size:14px;line-height:16.8px;color:#ffffff;-webkit-text-stroke:0.25px #ffffff;">2</span>
<svg class="b" style="left:0px;top:0px;" width="800" height="444" viewBox="0 0 800 444"><ellipse cx="100.1" cy="413.2" rx="15.9" ry="14.8" fill="#4a7d95"/></svg>
<span class="t " style="left:96.21px;top:405.71px;font-size:14px;line-height:16.8px;color:#ffffff;-webkit-text-stroke:0.25px #ffffff;">3</span>
<svg class="b" style="left:0px;top:0px;" width="800" height="444" viewBox="0 0 800 444"><ellipse cx="780.3" cy="68.6" rx="15.6" ry="14.5" fill="#4a7d95"/></svg>
<span class="t " style="left:776.41px;top:61.11px;font-size:14px;line-height:16.8px;color:#ffffff;-webkit-text-stroke:0.25px #ffffff;">4</span>
</div>
</div>
</body>
</html>
